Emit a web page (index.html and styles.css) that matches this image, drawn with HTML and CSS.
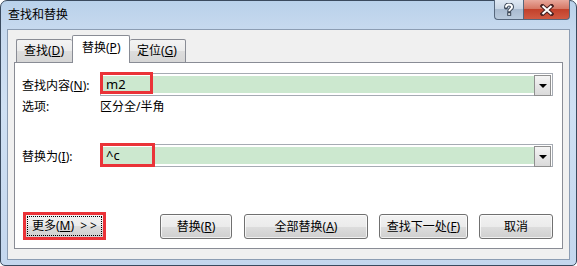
FILE: index.html
```html
<!DOCTYPE html>
<html lang="zh-CN">
<head>
    <meta charset="UTF-8">
    <title>查找和替换</title>
    <link rel="stylesheet" href="styles.css">
</head>
<body>

    <div class="window">
        <div class="titlebar">
            <span class="title">查找和替换</span>
            <div class="caption">
                <div class="cap help">
                    <svg width="12" height="13" viewBox="0 0 12 13">
                        <path d="M3 4.5 C3 2 4.5 1.5 6 1.5 C7.8 1.5 9 2.5 9 4 C9 6 6.2 6 6.2 8.2" fill="none" stroke="#3a4656" stroke-width="4" stroke-linecap="round"/>
                        <rect x="4.2" y="9.3" width="4" height="3.5" fill="#3a4656"/>
                        <path d="M3 4.5 C3 2 4.5 1.5 6 1.5 C7.8 1.5 9 2.5 9 4 C9 6 6.2 6 6.2 8.2" fill="none" stroke="#fff" stroke-width="2"/>
                        <rect x="5.2" y="10.3" width="2" height="1.5" fill="#fff"/>
                    </svg>
                </div>
                <div class="cap close">
                    <svg width="14" height="12" viewBox="0 0 14 12">
                        <path d="M2.5 2 L11.5 10 M11.5 2 L2.5 10" stroke="#4a2222" stroke-width="4.2" stroke-linecap="square"/>
                        <path d="M2.5 2 L11.5 10 M11.5 2 L2.5 10" stroke="#fff" stroke-width="2"/>
                    </svg>
                </div>
            </div>
        </div>

        <div class="client">
            <div class="tabs">
                <div class="tab">查找(<u>D</u>)</div>
                <div class="tab active">替换(<u>P</u>)</div>
                <div class="tab last">定位(<u>G</u>)</div>
            </div>

            <div class="panel">
                <div class="field-row find-row">
                    <span class="label">查找内容(<u>N</u>):</span>
                    <div class="combo">
                        <span class="value">m2</span>
                        <span class="drop"><i class="arrow"></i></span>
                        <span class="mark mark-find"></span>
                    </div>
                </div>

                <div class="opt-row">
                    <span class="label">选项:</span>
                    <span>区分全/半角</span>
                </div>

                <div class="field-row replace-row">
                    <span class="label">替换为(<u>I</u>):</span>
                    <div class="combo">
                        <span class="value">^c</span>
                        <span class="drop"><i class="arrow"></i></span>
                        <span class="mark mark-replace"></span>
                    </div>
                </div>

                <div class="button-row">
                    <button class="btn more"><span class="focus">更多(<u>M</u>) <span class="chev">&gt;&gt;</span></span></button>
                    <button class="btn w-replace">替换(<u>R</u>)</button>
                    <button class="btn w-all">全部替换(<u>A</u>)</button>
                    <button class="btn w-next">查找下一处(<u>F</u>)</button>
                    <button class="btn w-cancel">取消</button>
                </div>
            </div>
        </div>
    </div>

</body>
</html>
```

FILE: styles.css
```css
* {
    margin: 0;
    padding: 0;
    box-sizing: border-box;
}

body {
    font-family: 'Noto Sans', 'Noto Sans CJK SC', sans-serif;
    font-size: 12px;
    color: #000;
    background: #fff;
    overflow: hidden;
}

.window {
    width: 577px;
    height: 266px;
    border: 1px solid #3a4a5e;
    border-radius: 7px 7px 5px 5px;
    background: linear-gradient(180deg, #b9d1ea 0%, #c8daef 12%, #cfe0f3 40%, #c4d7ee 100%);
    padding: 0 6px 5px;
    display: flex;
    flex-direction: column;
}

/* Заголовок окна */
.titlebar {
    height: 28px;
    display: flex;
    justify-content: space-between;
    align-items: flex-start;
}

.title {
    padding: 6px 0 0 1px;
    line-height: 16px;
    font-size: 12px;
}

.caption {
    display: flex;
    margin-top: -1px;
}

.cap {
    height: 20px;
    display: flex;
    justify-content: center;
    align-items: center;
    border: 1px solid #56677d;
    border-top: none;
}

.help {
    width: 29px;
    border-right: none;
    border-radius: 0 0 0 4px;
    background: linear-gradient(180deg, #dfe8f3 0%, #c9d6e5 45%, #a9bbd0 50%, #b9cadd 100%);
}

.close {
    width: 47px;
    border-radius: 0 0 4px 0;
    background: linear-gradient(180deg, #e8a89c 0%, #d67865 45%, #c2412b 50%, #d05a43 100%);
}

/* Клиентская область */
.client {
    flex: 1;
    border: 1px solid #8c9db3;
    background: #f0f0f0;
    padding: 5px 6px 10px;
    display: flex;
    flex-direction: column;
}

.tabs {
    display: flex;
    align-items: flex-end;
    margin-left: 2px;
    height: 28px;
    position: relative;
    z-index: 1;
    margin-bottom: -1px;
}

.tab {
    width: 56px;
    height: 24px;
    border: 1px solid #898c95;
    border-bottom: none;
    border-right: none;
    border-radius: 2px 2px 0 0;
    background: linear-gradient(180deg, #f3f3f3 0%, #ebebeb 50%, #dddddd 51%, #d6d6d6 100%);
    padding-left: 7px;
    line-height: 22px;
    border-bottom: 1px solid #898c95;
}

.tab.last {
    border-right: 1px solid #898c95;
}

.tab.active {
    width: 58px;
    height: 28px;
    background: #fff;
    border-right: 1px solid #898c95;
    border-bottom: none;
    padding-left: 9px;
    line-height: 24px;
}

.tab.active + .tab {
    border-left: none;
}

.panel {
    height: 187px;
    background: #fff;
    border: 1px solid #898c95;
    padding: 10px 9px 0 7px;
}

.field-row {
    display: flex;
    align-items: center;
    height: 23px;
}

.label {
    width: 78px;
    flex-shrink: 0;
}

.combo {
    position: relative;
    width: 454px;
    height: 23px;
    border: 1px solid #a6abb3;
    padding: 2px;
    display: flex;
}

.value {
    flex: 1;
    background: #cce8cf;
    padding-left: 3px;
    font-size: 13px;
    line-height: 16px;
}

.drop {
    width: 17px;
    height: 21px;
    margin: -1px -1px -1px 0;
    border: 1px solid #8f8f8f;
    background: linear-gradient(180deg, #f5f5f5 0%, #e6e6e6 50%, #dadada 100%);
    display: flex;
    justify-content: center;
    align-items: center;
}

.arrow {
    width: 0;
    height: 0;
    border-left: 4px solid transparent;
    border-right: 4px solid transparent;
    border-top: 4px solid #000;
}

.mark {
    position: absolute;
    left: -1px;
    top: -2px;
    border: 3px solid #ea3338;
}

.mark-find {
    width: 53px;
    height: 22px;
}

.mark-replace {
    width: 55px;
    height: 24px;
}

.opt-row {
    display: flex;
    margin-top: 3px;
    line-height: 16px;
}

.replace-row {
    margin-top: 29px;
}

.button-row {
    display: flex;
    align-items: center;
    margin-top: 45px;
    margin-left: 1px;
}

.btn {
    height: 25px;
    font-family: inherit;
    font-size: 12px;
    color: #000;
    border: 1px solid #707070;
    border-radius: 3px;
    background: linear-gradient(180deg, #f2f2f2 0%, #ebebeb 50%, #dddddd 51%, #cfcfcf 100%);
    box-shadow: inset 0 0 0 1px rgba(255, 255, 255, 0.7);
}

.more {
    width: 83px;
    height: 28px;
    border: 3px solid #ea3338;
    border-radius: 0;
    box-shadow: none;
    padding: 1px;
    margin-right: 54px;
}

.focus {
    display: block;
    height: 100%;
    border: 1px dotted #000;
    line-height: 18px;
    text-align: left;
    padding-left: 4px;
}

.chev {
    letter-spacing: 3px;
    margin-left: 3px;
}

.w-replace {
    width: 72px;
    margin-right: 12px;
}

.w-all {
    width: 124px;
    margin-right: 11px;
}

.w-next {
    width: 89px;
    margin-right: 11px;
}

.w-cancel {
    width: 74px;
}
```
